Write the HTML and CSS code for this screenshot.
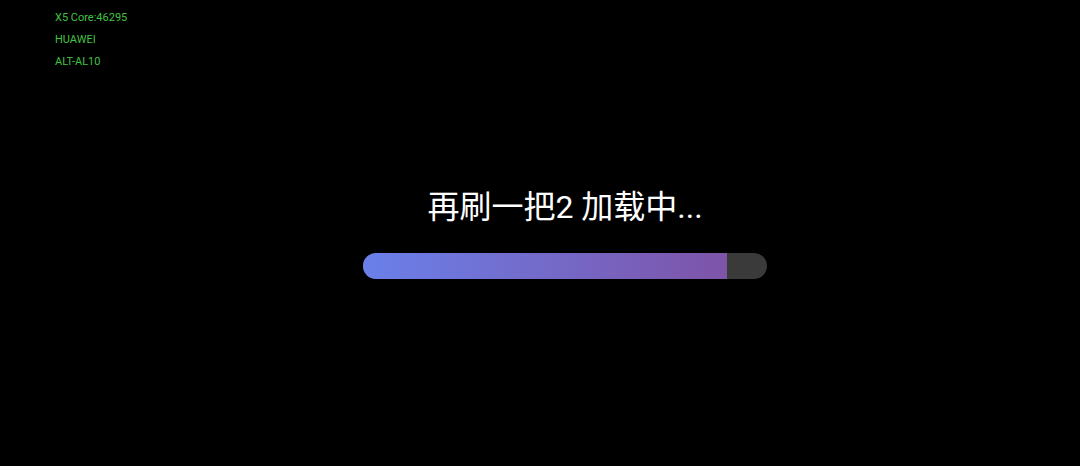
FILE: index.html
```html
<!DOCTYPE html>
<html lang="zh">
<head>
<meta charset="utf-8">
<title>加载中</title>
<link rel="stylesheet" href="styles.css">
</head>
<body>
<div class="page">
  <div class="info">
    <div class="info-line">X5 Core:46295</div>
    <div class="info-line">HUAWEI</div>
    <div class="info-line">ALT-AL10</div>
  </div>
  <div class="loader">
    <div class="title">再刷一把2 加载中...</div>
    <div class="track"><div class="fill" style="width:90%"></div></div>
  </div>
</div>
</body>
</html>
```
FILE: styles.css
```css
html, body {
  margin: 0;
  padding: 0;
  background: #000;
}
.page {
  width: 1080px;
  height: 466px;
  position: relative;
  overflow: hidden;
  font-family: Roboto, "Noto Sans CJK SC", sans-serif;
}
.info {
  position: absolute;
  left: 55px;
  top: 7px;
  color: #42c242;
  font-size: 11px;
}
.info-line {
  height: 22px;
  line-height: 22px;
}
.loader {
  padding-top: 184px;
  padding-left: 50px;
  display: flex;
  flex-direction: column;
  align-items: center;
}
.title {
  color: #fff;
  font-family: Roboto, "Noto Sans CJK SC", sans-serif;
  font-size: 32px;
  line-height: 46px;
  height: 46px;
}
.track {
  margin-top: 23px;
  width: 404px;
  height: 26px;
  border-radius: 13px;
  background: #3a3a3a;
  overflow: hidden;
}
.fill {
  height: 100%;
  background: linear-gradient(90deg, #6a80ea 0%, #7e54a8 100%);
}
```
